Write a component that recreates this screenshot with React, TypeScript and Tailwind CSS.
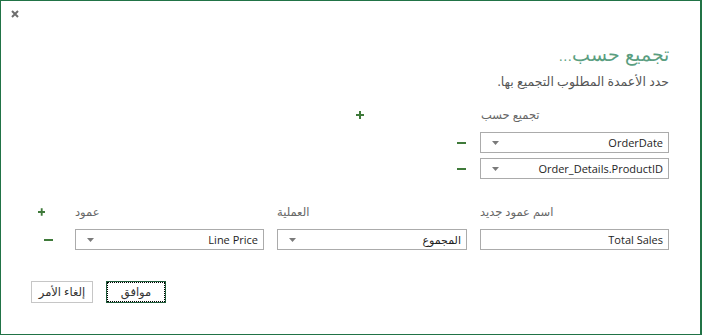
import React from "react";

const font = { fontFamily: '"Open Sans", "DejaVu Sans", sans-serif' };

function Arrow() {
  return (
    <svg width="7" height="4" viewBox="0 0 7 4" className="block">
      <path d="M0 0 H7 L3.5 4 Z" fill="#7a7a7a" />
    </svg>
  );
}

function Plus() {
  return (
    <svg width="8" height="8" viewBox="0 0 8 8" className="block">
      <path d="M0 4 H8 M4 0 V8" stroke="#3f7a3a" strokeWidth="2" />
    </svg>
  );
}

function Minus() {
  return (
    <svg width="9" height="2" viewBox="0 0 9 2" className="block">
      <path d="M0 1 H9" stroke="#3f7a3a" strokeWidth="2" />
    </svg>
  );
}

function Select({ value, w }: { value: string; w: string }) {
  return (
    <div
      className={`${w} h-[21px] border border-[#ababab] bg-white flex items-center justify-between pl-[11px] pr-[5px]`}
    >
      <Arrow />
      <span dir="auto" className="text-[11px] text-[#1e1e1e] leading-none">
        {value}
      </span>
    </div>
  );
}

export default function App() {
  return (
    <div
      style={font}
      className="w-[702px] h-[335px] bg-white border border-[#217346] border-r-2 flex flex-col"
    >
      <div className="pl-[10px] pt-[9px] h-[20px]">
        <svg width="8" height="8" viewBox="0 0 8 8" className="block">
          <path d="M1 1 L7 7 M7 1 L1 7" stroke="#6e6e6e" strokeWidth="2" />
        </svg>
      </div>

      <div className="pr-[31px] flex flex-col items-end">
        <div dir="rtl" className="mt-[20px] text-[19px] leading-[26px] text-[#5a9e80] font-light">
          تجميع حسب...
        </div>
        <div dir="rtl" className="mt-[6px] text-[12.5px] leading-[18px] text-[#555]">
          حدد الأعمدة المطلوب التجميع بها.
        </div>

        <div className="mt-[16px] flex items-center">
          <Plus />
          <div className="w-[117px]" />
          <div dir="rtl" className="w-[188px] text-left text-[11.5px] leading-[16px] text-[#666]">
            تجميع حسب
          </div>
        </div>

        <div className="mt-[9px] flex items-center">
          <Minus />
          <div className="w-[14px]" />
          <Select w="w-[189px]" value="OrderDate" />
        </div>
        <div className="mt-[5px] flex items-center">
          <Minus />
          <div className="w-[14px]" />
          <Select w="w-[189px]" value="Order_Details.ProductID" />
        </div>
      </div>

      <div className="pl-[37px] pr-[31px] mt-[25px]">
        <div className="flex items-center">
          <Plus />
          <div className="w-[32px]" />
          <div className="flex gap-[13px]">
            <div dir="rtl" className="w-[189px] text-left text-[11.5px] leading-[16px] text-[#666]">
              عمود
            </div>
            <div dir="rtl" className="w-[190px] text-left text-[11.5px] leading-[16px] text-[#666]">
              العملية
            </div>
            <div dir="rtl" className="w-[189px] text-left text-[11.5px] leading-[16px] text-[#666]">
              اسم عمود جديد
            </div>
          </div>
        </div>
        <div className="mt-[9px] flex items-center">
          <div className="w-[16px] flex justify-end">
            <Minus />
          </div>
          <div className="w-[23px]" />
          <div className="flex gap-[13px]">
            <Select w="w-[189px]" value="Line Price" />
            <Select w="w-[190px]" value="المجموع" />
            <div className="w-[189px] h-[21px] border border-[#ababab] flex items-center justify-end pr-[5px]">
              <span className="text-[11px] text-[#1e1e1e] leading-none">Total Sales</span>
            </div>
          </div>
        </div>
      </div>

      <div className="pl-[30px] mt-[31px] flex gap-[13px]">
        <div className="w-[62px] h-[22px] border border-[#c6c6c6] flex items-center justify-center">
          <span dir="rtl" className="text-[11.5px] text-[#333] leading-none">إلغاء الأمر</span>
        </div>
        <div className="relative w-[60px] h-[22px] border border-[#1f5c3a] flex items-center justify-center">
          <div className="absolute inset-0 border border-dotted border-black" />
          <span dir="rtl" className="text-[11.5px] text-[#333] leading-none">موافق</span>
        </div>
      </div>
    </div>
  );
}
